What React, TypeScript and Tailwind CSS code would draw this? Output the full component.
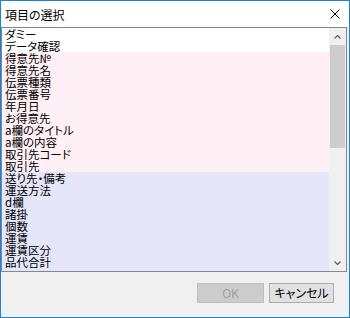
import React from "react";

type Item = { label: string; tone: "white" | "pink" | "lavender" };

const items: Item[] = [
  { label: "ダミー", tone: "white" },
  { label: "データ確認", tone: "white" },
  { label: "得意先№", tone: "pink" },
  { label: "得意先名", tone: "pink" },
  { label: "伝票種類", tone: "pink" },
  { label: "伝票番号", tone: "pink" },
  { label: "年月日", tone: "pink" },
  { label: "お得意先", tone: "pink" },
  { label: "a欄のタイトル", tone: "pink" },
  { label: "a欄の内容", tone: "pink" },
  { label: "取引先コード", tone: "pink" },
  { label: "取引先", tone: "pink" },
  { label: "送り先・備考", tone: "lavender" },
  { label: "運送方法", tone: "lavender" },
  { label: "d欄", tone: "lavender" },
  { label: "諸掛", tone: "lavender" },
  { label: "個数", tone: "lavender" },
  { label: "運賃", tone: "lavender" },
  { label: "運賃区分", tone: "lavender" },
  { label: "品代合計", tone: "lavender" }
];

const toneClass = {
  white: "bg-white",
  pink: "bg-[#fff0f5]",
  lavender: "bg-[#e6e6fa]"
};

const font =
  "font-['Noto_Sans_CJK_JP','Noto_Sans',sans-serif] [font-feature-settings:'palt']";

export default function App() {
  return (
    <div
      className={`w-[350px] h-[318px] flex flex-col bg-[#f0f0f0] border border-[#1883d7] text-black ${font}`}
    >
      {/* title bar */}
      <div className="h-[26px] shrink-0 bg-white flex items-center justify-between pl-[4px] pr-[9px]">
        <span className="text-[12px] leading-[12px] pt-[1px]">項目の選択</span>
        <svg width="10" height="10" viewBox="0 0 10 10">
          <path d="M0.5 0.5L9.5 9.5M9.5 0.5L0.5 9.5" stroke="#000" strokeWidth="1" />
        </svg>
      </div>

      {/* list box */}
      <div className="w-[346px] h-[245px] shrink-0 border border-[#828790] flex">
        <div className="flex-1 flex flex-col bg-[#e6e6fa] overflow-hidden">
          {items.map((it) => (
            <div
              key={it.label}
              className={`h-[12px] shrink-0 pl-[3px] text-[11.5px] leading-[12px] whitespace-nowrap ${toneClass[it.tone]}`}
            >
              {it.label}
            </div>
          ))}
        </div>
        {/* scrollbar */}
        <div className="w-[17px] shrink-0 flex flex-col bg-[#f0f0f0]">
          <div className="h-[17px] flex items-center justify-center">
            <svg width="7" height="4" viewBox="0 0 7 4">
              <path d="M0.5 3.5L3.5 0.5L6.5 3.5" stroke="#606060" strokeWidth="1.2" fill="none" />
            </svg>
          </div>
          <div className="h-[103px] mx-[1px] bg-[#cdcdcd]" />
          <div className="flex-1" />
          <div className="h-[17px] flex items-center justify-center">
            <svg width="7" height="4" viewBox="0 0 7 4">
              <path d="M0.5 0.5L3.5 3.5L6.5 0.5" stroke="#606060" strokeWidth="1.2" fill="none" />
            </svg>
          </div>
        </div>
      </div>

      {/* buttons */}
      <div className="flex justify-end gap-[5px] pt-[11px] pr-[15px]">
        <button
          type="button"
          disabled
          className="w-[67px] h-[20px] border border-[#bfbfbf] bg-[#cccccc] text-[#a0a0a0] text-[12px] leading-[12px] flex items-center justify-center"
        >
          OK
        </button>
        <button
          type="button"
          className="w-[65px] h-[20px] border border-[#adadad] bg-[#e1e1e1] text-[12px] leading-[12px] flex items-center justify-center"
        >
          キャンセル
        </button>
      </div>
    </div>
  );
}
